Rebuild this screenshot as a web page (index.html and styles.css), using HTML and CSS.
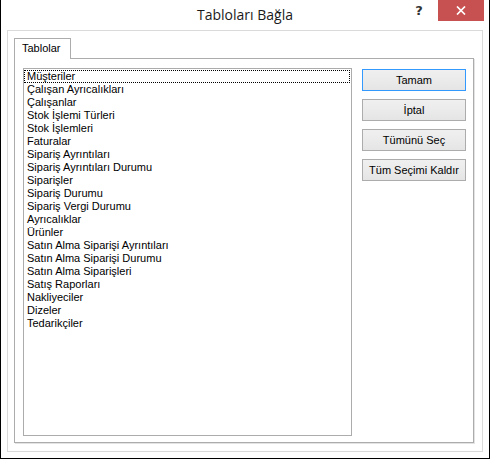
FILE: index.html
```html
<!DOCTYPE html>
<html lang="tr">
<head>
<meta charset="utf-8">
<title>Tabloları Bağla</title>
<link rel="stylesheet" href="styles.css">
</head>
<body>
<div class="window">
  <div class="titlebar">
    <div class="tb-left"></div>
    <div class="title">Tabloları Bağla</div>
    <div class="tb-right">
      <div class="help">?</div>
      <div class="close">
        <svg width="10" height="9" viewBox="0 0 10 9"><path d="M1 0.5 L9 8.5 M9 0.5 L1 8.5" stroke="#fff" stroke-width="1.7" fill="none"/></svg>
      </div>
    </div>
  </div>
  <div class="frame">
    <div class="tabs"><div class="tab">Tablolar</div></div>
    <div class="panel">
      <div class="listbox">
        <div class="item focus">Müşteriler</div>
        <div class="item">Çalışan Ayrıcalıkları</div>
        <div class="item">Çalışanlar</div>
        <div class="item">Stok İşlemi Türleri</div>
        <div class="item">Stok İşlemleri</div>
        <div class="item">Faturalar</div>
        <div class="item">Sipariş Ayrıntıları</div>
        <div class="item">Sipariş Ayrıntıları Durumu</div>
        <div class="item">Siparişler</div>
        <div class="item">Sipariş Durumu</div>
        <div class="item">Sipariş Vergi Durumu</div>
        <div class="item">Ayrıcalıklar</div>
        <div class="item">Ürünler</div>
        <div class="item">Satın Alma Siparişi Ayrıntıları</div>
        <div class="item">Satın Alma Siparişi Durumu</div>
        <div class="item">Satın Alma Siparişleri</div>
        <div class="item">Satış Raporları</div>
        <div class="item">Nakliyeciler</div>
        <div class="item">Dizeler</div>
        <div class="item">Tedarikçiler</div>
      </div>
      <div class="buttons">
        <button class="btn default">Tamam</button>
        <button class="btn">İptal</button>
        <button class="btn">Tümünü Seç</button>
        <button class="btn">Tüm Seçimi Kaldır</button>
      </div>
    </div>
  </div>
</div>
</body>
</html>
```

FILE: styles.css
```css
html, body {
  margin: 0;
  padding: 0;
  background: #ffffff;
}

.window {
  width: 490px;
  height: 459px;
  box-sizing: border-box;
  border: 1px solid #000;
  border-top: 0;
  background: #ffffff;
  font-family: "Liberation Sans", Arial, sans-serif;
  font-size: 11px;
  color: #000;
}

.titlebar {
  height: 30px;
  display: grid;
  grid-template-columns: 1fr auto 1fr;
}

.title {
  font-family: "Open Sans", "Noto Sans", sans-serif;
  font-size: 14px;
  line-height: 30px;
  color: #1a1a1a;
  white-space: nowrap;
}

.tb-right {
  display: flex;
  justify-content: flex-end;
  align-items: flex-start;
  padding-right: 5px;
}

.help {
  width: 26px;
  height: 21px;
  display: flex;
  align-items: center;
  justify-content: center;
  font-family: "DejaVu Sans", sans-serif;
  font-weight: bold;
  font-size: 13px;
  color: #333;
  padding-right: 6px;
}

.close {
  width: 46px;
  height: 21px;
  background: #c75050;
  display: flex;
  align-items: center;
  justify-content: center;
}

.frame {
  margin-left: 6px;
  width: 476px;
  height: 422px;
  box-sizing: border-box;
  border: 1px solid #dadada;
  padding: 7px 7px 0 6px;
  display: flex;
  flex-direction: column;
}

.tabs {
  display: flex;
  height: 20px;
}

.tab {
  position: relative;
  z-index: 1;
  width: 57px;
  height: 21px;
  box-sizing: border-box;
  border: 1px solid #acacac;
  border-bottom: 0;
  background: #fff;
  padding-left: 7px;
  line-height: 19px;
}

.panel {
  width: 460px;
  height: 385px;
  box-sizing: border-box;
  border: 1px solid #acacac;
  box-shadow: 1px 1px 0 #e3e3e3;
  padding: 9px 0 0 8px;
  display: flex;
  gap: 10px;
}

.listbox {
  width: 329px;
  height: 368px;
  box-sizing: border-box;
  border: 1px solid #acacac;
  padding: 1px 1px 0 0;
}

.item {
  height: 13px;
  box-sizing: border-box;
  border: 1px solid transparent;
  padding-left: 2px;
  line-height: 11px;
  white-space: nowrap;
}

.item.focus {
  border: 1px dotted #000;
}

.buttons {
  display: flex;
  flex-direction: column;
  gap: 8px;
  padding-top: 1px;
}

.btn {
  width: 104px;
  height: 22px;
  box-sizing: border-box;
  border: 1px solid #acacac;
  background: linear-gradient(#f0f0f0, #e5e5e5);
  font-family: "Liberation Sans", Arial, sans-serif;
  font-size: 11px;
  color: #000;
  padding: 0;
  margin: 0;
}

.btn.default {
  border-color: #3399ff;
}
```
